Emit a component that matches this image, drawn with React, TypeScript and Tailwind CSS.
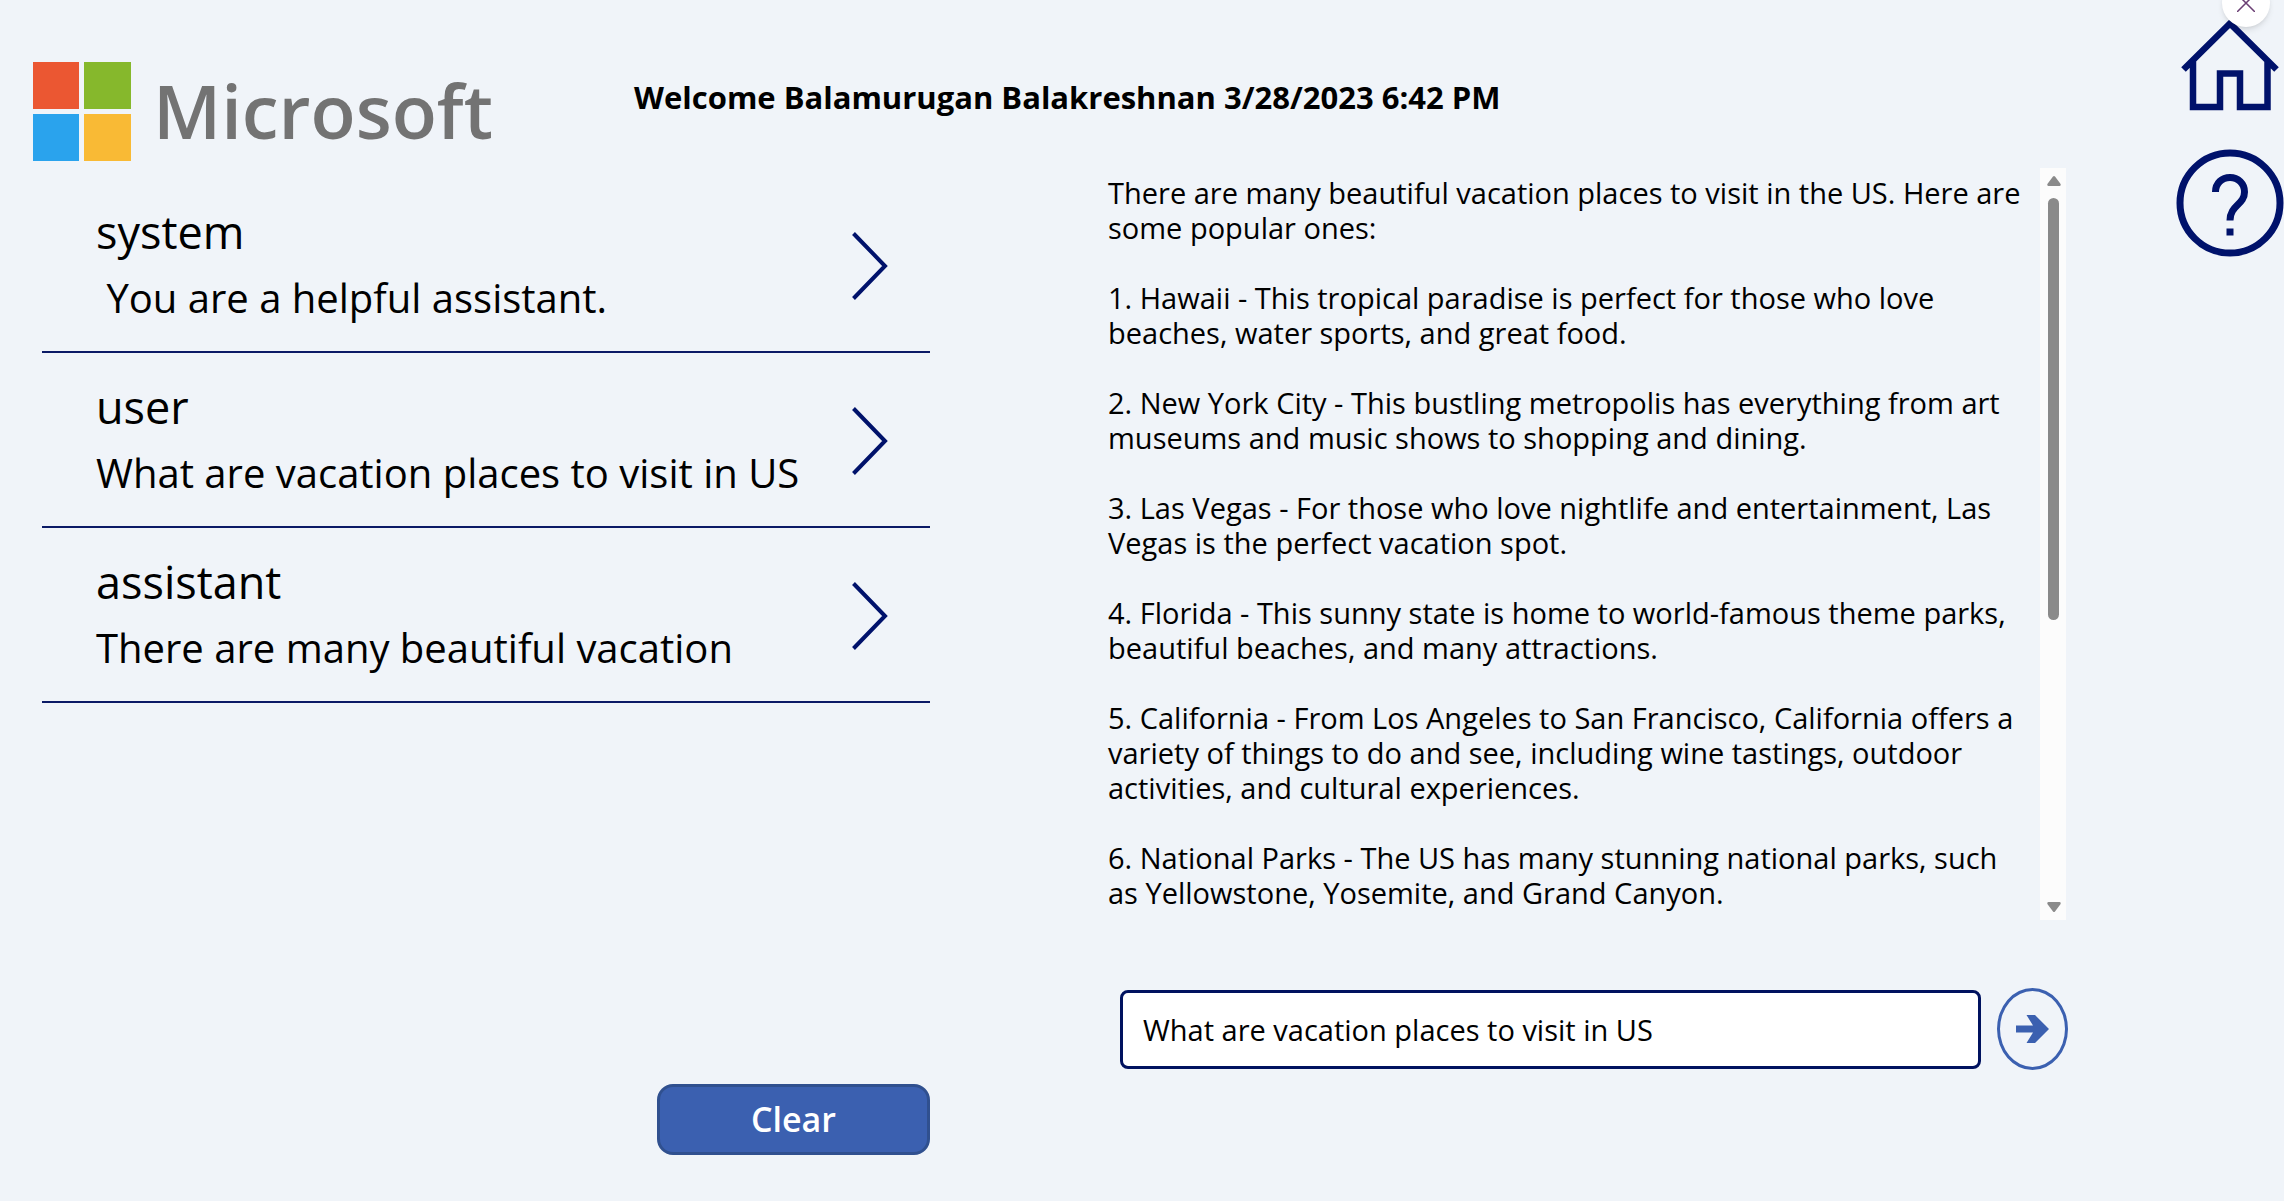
import React, { useState } from "react";

const messages = [
  { role: "system", content: " You are a helpful assistant." },
  { role: "user", content: "What are vacation places to visit in US" },
  { role: "assistant", content: "There are many beautiful vacation" },
];

const answer = [
  "There are many beautiful vacation places to visit in the US. Here are some popular ones:",
  "1. Hawaii - This tropical paradise is perfect for those who love beaches, water sports, and great food.",
  "2. New York City - This bustling metropolis has everything from art museums and music shows to shopping and dining.",
  "3. Las Vegas - For those who love nightlife and entertainment, Las Vegas is the perfect vacation spot.",
  "4. Florida - This sunny state is home to world-famous theme parks, beautiful beaches, and many attractions.",
  "5. California - From Los Angeles to San Francisco, California offers a variety of things to do and see, including wine tastings, outdoor activities, and cultural experiences.",
  "6. National Parks - The US has many stunning national parks, such as Yellowstone, Yosemite, and Grand Canyon.",
];

function Logo() {
  return (
    <div className="flex items-center gap-[22px]">
      <div className="grid grid-cols-[46px_47px] grid-rows-[47px_47px] gap-[5px]">
        <span className="bg-[#eb5732]" />
        <span className="bg-[#86b82c]" />
        <span className="bg-[#2aa3ed]" />
        <span className="bg-[#f9ba35]" />
      </div>
      <span className="text-[74px] leading-[100px] font-semibold text-[#737373]">Microsoft</span>
    </div>
  );
}

function MessageRow({ role, content }: { role: string; content: string }) {
  return (
    <li className="flex items-start justify-between border-b-2 border-[#0b1a66] pt-6 pr-[42px] pb-6 pl-[54px]">
      <div>
        <h2 className="text-[45px] leading-[60px]">{role}</h2>
        <p className="pt-1.5 text-[40px] leading-[59px] whitespace-pre">{content}</p>
      </div>
      <button type="button" aria-label={`Open ${role} message`} className="mt-[30px]">
        <svg width="36" height="68" viewBox="0 0 36 68" fill="none" stroke="#00126b" strokeWidth="4">
          <path d="M1.5 1.5 33 34 1.5 66.5" />
        </svg>
      </button>
    </li>
  );
}

function ScrollTrack() {
  return (
    <div aria-hidden="true" className="flex w-[26px] shrink-0 flex-col items-center bg-[#fcfcfc] py-2">
      <svg width="14" height="10" viewBox="0 0 14 10" fill="#8a8a8a" className="ml-0.5">
        <path d="M6 .6Q7-.4 8 .6L13.6 8Q14 10 12.5 10H1.5Q0 10 .4 8Z" />
      </svg>
      <div className="flex w-full grow flex-col items-center pt-3">
        <div className="h-[60%] w-[11px] rounded-full bg-[#8a8a8a]" />
      </div>
      <svg width="14" height="10" viewBox="0 0 14 10" fill="#8a8a8a" className="ml-0.5">
        <path d="M6 9.4Q7 10.4 8 9.4L13.6 2Q14 0 12.5 0H1.5Q0 0 .4 2Z" />
      </svg>
    </div>
  );
}

export default function App() {
  const [prompt, setPrompt] = useState("What are vacation places to visit in US");
  return (
    <div className="relative flex min-h-screen overflow-hidden bg-[#f0f4f9] font-['Open_Sans','Noto_Sans',sans-serif] text-black">
      <div className="flex min-w-0 grow flex-col">
        <header className="flex h-[168px] items-start">
          <div className="w-[634px] shrink-0 pt-[61px] pl-[33px]">
            <Logo />
          </div>
          <h1 className="pt-[75px] text-[31px] leading-[44px] font-bold whitespace-nowrap">
            Welcome Balamurugan Balakreshnan 3/28/2023 6:42 PM
          </h1>
        </header>
        <main className="grid grow grid-cols-[888fr_960fr] gap-[178px] pr-[108px] pl-[42px]">
          <section aria-label="Messages" className="flex flex-col pt-2.5">
            <ul>
              {messages.map((m) => (
                <MessageRow key={m.role} role={m.role} content={m.content} />
              ))}
            </ul>
            <button
              type="button"
              className="mt-auto mb-[46px] h-[71px] w-[273px] self-end rounded-2xl border-3 border-[#30508f] bg-[#3b60b0] text-[34px] font-semibold text-white"
            >
              Clear
            </button>
          </section>
          <section aria-label="Answer" className="flex flex-col">
            <div className="flex h-[752px] justify-between pr-0.5">
              <div className="grow space-y-[35px] pt-[7px] pr-2.5 text-[29px] leading-[35px]">
                {answer.map((p) => (
                  <p key={p}>{p}</p>
                ))}
              </div>
              <ScrollTrack />
            </div>
            <form className="flex items-center gap-4 pt-[68px] pl-3" onSubmit={(e) => e.preventDefault()}>
              <input
                type="text"
                aria-label="Prompt"
                value={prompt}
                onChange={(e) => setPrompt(e.target.value)}
                className="h-[79px] min-w-0 grow rounded-lg border-3 border-[#00125f] bg-white px-5 text-[29px]"
              />
              <button
                type="submit"
                aria-label="Send"
                className="flex h-[82px] w-[71px] shrink-0 items-center justify-center rounded-[50%] border-3 border-[#3b60b0]"
              >
                <svg width="33" height="28" viewBox="0 0 33 28" fill="#3b60b0">
                  <path d="M0 10.5H17L10.5 0H19L33 14 19 28H10.5L17 17.5H0Z" />
                </svg>
              </button>
            </form>
          </section>
        </main>
      </div>
      <nav className="flex w-[108px] shrink-0 flex-col items-start pt-5">
        <button type="button" aria-label="Home" className="ml-1">
          <svg width="100" height="91" viewBox="0 0 100 91" fill="none" stroke="#00126b" strokeWidth="6.5">
            <path d="M3.5 49.5 50 3.5 96.5 49.5M13 41V87H40V53.5H60V87H87.5V41" />
          </svg>
        </button>
        <button type="button" aria-label="Help" className="mt-[38px]">
          <svg width="108" height="108" viewBox="0 0 108 108" fill="none" stroke="#00126b" strokeWidth="7">
            <circle cx="54" cy="54" r="50" />
            <path d="M39.5 43C39.5 34 46 28.5 54 28.5S68.5 34.5 68.5 43C68.5 56 54 56 54 71.5M54 79.5V86.5" />
          </svg>
        </button>
      </nav>
      <button
        type="button"
        aria-label="Close"
        className="absolute -top-[21px] right-[14px] flex size-12 items-center justify-center rounded-full bg-white shadow-md"
      >
        <svg width="18" height="18" viewBox="0 0 18 18" stroke="#6b3f74" strokeWidth="1.5">
          <path d="M0 0 18 18M18 0 0 18" />
        </svg>
      </button>
    </div>
  );
}
